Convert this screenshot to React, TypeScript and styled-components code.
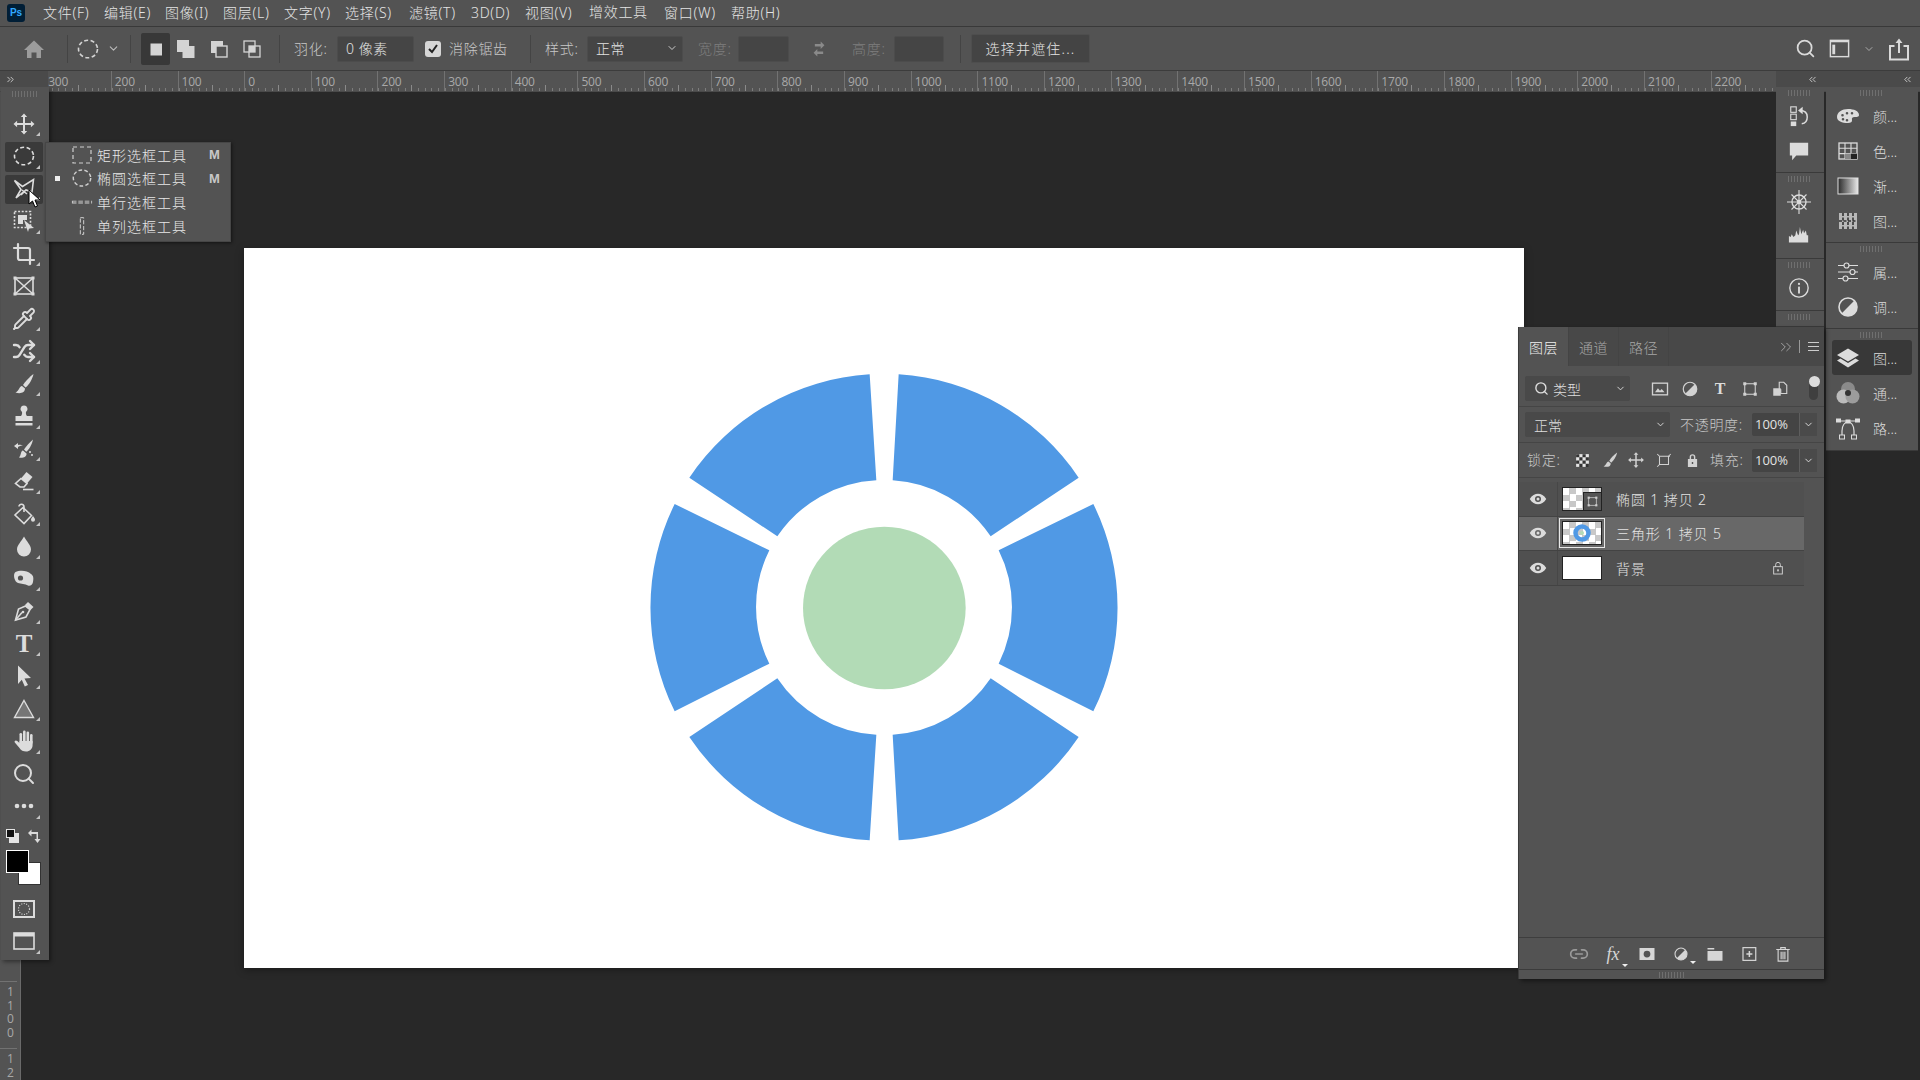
import React from 'react';
import styled, { createGlobalStyle } from 'styled-components';
import { Crop, Pipette, Shuffle, Search, Link2, ChevronDown, ChevronsLeft, ChevronsRight } from 'lucide-react';

const Global = createGlobalStyle`
  html, body { margin: 0; padding: 0; background: #282828; }
  #root { width: 1920px; height: 1080px; overflow: hidden; }
  * { box-sizing: border-box; }
`;

const Frame = styled.div`
  width: 1920px; height: 1080px; display: flex; flex-direction: column; background: #282828;
  font-family: "Noto Sans", "Noto Sans CJK SC", sans-serif; font-size: 14px; font-weight: 300;
  color: #dcdcdc; overflow: hidden;
`;
const MenuBar = styled.div`
  height: 27px; flex: none; display: flex; align-items: center; background: #535353;
  border-bottom: 1px solid #393939; padding-left: 7px;
`;
const PsLogo = styled.div`
  width: 18px; height: 18px; border-radius: 3px; background: #001e36; color: #31a8ff;
  font: 700 10px/18px "Liberation Sans", sans-serif; text-align: center; margin-right: 18px; flex: none;
`;
const MenuItem = styled.div<{ $w: number; $up?: boolean }>`
  width: ${p => p.$w}px; flex: none; white-space: nowrap; line-height: 20px; color: #e4e4e4; letter-spacing: .7px;
  padding-bottom: ${p => (p.$up ? 3 : 0)}px;
`;

const OptionsBar = styled.div`
  height: 44px; flex: none; display: flex; align-items: center; background: #535353;
  border-bottom: 1px solid #3c3c3c;
`;
const Cell = styled.div<{ $w: number; $on?: boolean }>`
  width: ${p => p.$w}px; height: 32px; flex: none; display: flex; align-items: center; justify-content: center;
  color: #d4d4d4; background: ${p => (p.$on ? '#383838' : 'transparent')}; border-radius: 2px;
`;
const MarqueeCell = styled.div`
  width: 62px; height: 32px; flex: none; display: flex; align-items: center; padding-left: 8px; color: #d4d4d4; gap: 7px;
`;
const Sep = styled.div<{ $ml?: number }>`
  width: 1px; height: 28px; background: #444; flex: none; margin-left: ${p => p.$ml ?? 0}px;
`;
const OptLabel = styled.div<{ $ml: number; $w: number; $dim?: boolean }>`
  margin-left: ${p => p.$ml}px; width: ${p => p.$w}px; flex: none; white-space: nowrap; letter-spacing: .7px;
  padding-bottom: 2px; color: ${p => (p.$dim ? '#7f7f7f' : '#c8c8c8')};
`;
const OptInput = styled.div<{ $w: number; $ml: number }>`
  width: ${p => p.$w}px; height: 26px; margin-left: ${p => p.$ml}px; flex: none; background: #454545;
  border: 1px solid #4c4c4c; display: flex; align-items: center; justify-content: space-between;
  padding: 0 4px 2px 8px; color: #e2e2e2; border-radius: 2px; letter-spacing: .5px;
`;
const Check = styled.div<{ $ml: number }>`
  width: 16px; height: 16px; margin-left: ${p => p.$ml}px; flex: none; background: #d6d6d6; border-radius: 3px;
  display: flex; align-items: center; justify-content: center; color: #222;
`;
const OptButton = styled.div<{ $ml: number }>`
  width: 119px; height: 29px; margin-left: ${p => p.$ml}px; flex: none; background: #444; border: 1px solid #4e4e4e;
  display: flex; align-items: center; justify-content: center; border-radius: 2px; color: #e4e4e4; letter-spacing: 1.2px;
  padding-bottom: 2px;
`;
const OptRight = styled.div`
  margin-left: auto; display: flex; align-items: center; color: #dadada; padding-right: 9px; gap: 12px;
`;

const Body = styled.div`
  position: relative; flex: 1; display: flex; flex-direction: column; min-height: 0;
`;
const RulerRow = styled.div`
  height: 21px; flex: none; display: flex; background: #535353; border-bottom: 1px solid #4a4a4a;
`;
const Cap = styled.div<{ $w: number }>`
  width: ${p => p.$w}px; height: 16px; flex: none; background: #4a4a4a; color: #cfcfcf; display: flex; align-items: center;
  justify-content: space-between; padding: 0 5px; z-index: 4;
`;
const CapLeftIcon = styled(ChevronsLeft)`
  margin-left: 26px;
`;
const CapRightIcon = styled(ChevronsLeft)`
  margin-right: 2px;
`;
const RulerTrack = styled.div`
  flex: 1; display: flex; overflow: hidden; min-width: 0;
`;
const RulerCell = styled.div<{ $first?: boolean }>`
  width: 66.667px; flex: none; border-left: 1px solid #727272; margin-left: ${p => (p.$first ? -3.8 : 0)}px;
  padding-left: 3px; font: 400 12px/22px "Open Sans", sans-serif; letter-spacing: -.2px; color: #a9a9a9;
  background-image:
    linear-gradient(#8a8a8a, #8a8a8a),
    repeating-linear-gradient(90deg, #7c7c7c 0 1px, transparent 1px 6.667px);
  background-size: 1px 6px, 100% 3px;
  background-position: 33px 100%, 0 100%;
  background-repeat: no-repeat;
`;
const Workspace = styled.div`
  flex: 1; display: flex; min-height: 0;
`;
const VRuler = styled.div`
  width: 21px; flex: none; background: #535353; padding-top: 889px; overflow: hidden;
  border-right: 1px solid #6a6a6a;
`;
const VCell = styled.div`
  height: 66.667px; border-top: 1px solid #727272; padding: 1px 0 0 3px;
  font: 400 12px/14px "Open Sans", sans-serif; color: #a9a9a9;
  writing-mode: vertical-rl; text-orientation: upright; letter-spacing: -3.5px;
`;
const Canvas = styled.div`
  flex: 1; background: #282828; min-width: 0;
`;
const Doc = styled.div`
  width: 1280px; height: 720px; margin: 156px 0 0 223px; background: #fff; display: flex;
  align-items: center; justify-content: center; box-shadow: 0 2px 8px rgba(0,0,0,.35);
`;

const Toolbox = styled.div`
  position: absolute; left: 1px; top: 16px; width: 48px; height: 873px; background: #535353; z-index: 3;
  display: flex; flex-direction: column; padding: 20.7px 2px 0 0; box-shadow: 2px 2px 4px rgba(0,0,0,.4);
`;
const Grip = styled.div<{ $w?: number; $top?: number }>`
  position: absolute; top: ${p => p.$top ?? 4}px; left: 50%; transform: translateX(-50%);
  width: ${p => p.$w ?? 26}px; height: 6px;
  background: repeating-linear-gradient(90deg, #6f6f6f 0 1px, transparent 1px 3px);
`;
const Tool = styled.div<{ $on?: boolean }>`
  position: relative; height: 32.5px; flex: none; display: flex; align-items: center; justify-content: center;
  color: #dcdcdc;
  &::before {
    content: ''; position: absolute; inset: 2px 4px 1px 4px; border-radius: 2px;
    background: ${p => (p.$on ? '#3a3a3a' : 'transparent')};
  }
  svg, b { position: relative; }
`;
const Corner = styled.i`
  position: absolute; right: 7px; bottom: 4px; width: 0; height: 0;
  border-style: solid; border-width: 0 0 4px 4px; border-color: transparent transparent #c4c4c4 transparent;
`;
const SerifT = styled.b<{ $s?: number }>`
  font: 700 ${p => p.$s ?? 25}px/${p => p.$s ?? 25}px "Liberation Serif", serif; color: #dcdcdc;
`;
const Colors = styled.div`
  position: relative; height: 70px; flex: none;
`;
const Swatch = styled.div<{ $x: number; $y: number; $c: string; $b: string; $s: number }>`
  position: absolute; left: ${p => p.$x}px; top: ${p => p.$y}px; width: ${p => p.$s}px; height: ${p => p.$s}px;
  background: ${p => p.$c}; border: 1px solid ${p => p.$b};
`;
const SwapIcon = styled.div`
  position: absolute; left: 26px; top: 5px; color: #dadada; display: flex;
`;
const Pointer = styled.svg`
  position: absolute; left: 28px; top: 118px; z-index: 6;
`;

const Flyout = styled.div`
  position: absolute; left: 45px; top: 71px; width: 186px; height: 100px; z-index: 5; background: #535353;
  border: 1px solid #464646; box-shadow: 1px 1px 3px rgba(0,0,0,.5);
`;
const FlyRow = styled.div`
  height: 23.6px; display: flex; align-items: center; color: #e8e8e8;
`;
const Bullet = styled.span<{ $on?: boolean }>`
  width: 5px; height: 5px; margin-left: 9px; flex: none; background: ${p => (p.$on ? '#eee' : 'transparent')};
`;
const FlyIcon = styled.span`
  width: 24px; margin-left: 10px; flex: none; display: flex; justify-content: center; color: #cfcfcf;
`;
const FlyText = styled.span`
  margin-left: 3px; width: 96px; flex: none; letter-spacing: 1px; white-space: nowrap;
`;
const FlyKey = styled.span`
  margin-left: 16px; font: 700 13px "Liberation Sans", sans-serif; color: #c8c8c8;
`;

const Dock = styled.div`
  position: absolute; left: 1776px; top: 16px; display: flex; gap: 2px; z-index: 1;
`;
const DockCol = styled.div<{ $w: number }>`
  width: ${p => p.$w}px; display: flex; flex-direction: column; gap: 1px;
`;
const DockGroup = styled.div<{ $pb: number }>`
  position: relative; background: #535353; padding: 11px 0 ${p => p.$pb}px; box-shadow: 0 1px 0 #3a3a3a;
`;
const DockRow = styled.div<{ $on?: boolean }>`
  height: 35px; display: flex; align-items: center; color: #dcdcdc;
  padding-left: ${p => (p.$on ? 4 : 10)}px; margin: 0 6px 0 ${p => (p.$on ? 6 : 0)}px; position: relative;
  background: ${p => (p.$on ? '#383838' : 'transparent')}; border-radius: 3px; gap: 13px; white-space: nowrap;
`;
const DockIconOnly = styled.div`
  height: 35px; display: flex; align-items: center; justify-content: center; color: #dcdcdc; padding-right: 3px;
`;
const DockIco = styled.span`
  width: 24px; flex: none; display: flex; justify-content: center;
`;

const LayersPanel = styled.div`
  position: absolute; left: 1519px; top: 256px; width: 305px; height: 652px; background: #535353; z-index: 2;
  display: flex; flex-direction: column; box-shadow: -1px 0 0 #3c3c3c, 2px 2px 4px rgba(0,0,0,.45);
`;
const Tabs = styled.div`
  height: 39px; flex: none; display: flex; background: #484848; align-items: stretch;
`;
const Tab = styled.div<{ $on?: boolean }>`
  width: 50px; display: flex; align-items: center; justify-content: center; letter-spacing: .6px;
  background: ${p => (p.$on ? '#535353' : 'transparent')}; color: ${p => (p.$on ? '#f0f0f0' : '#a6a6a6')};
  border-right: 1px solid #444;
`;
const TabTools = styled.div`
  margin-left: auto; display: flex; align-items: center; gap: 4px; padding-right: 5px; color: #bdbdbd;
`;
const TabBar = styled.i`
  width: 1px; height: 13px; background: #999; margin: 0 4px 0 0;
`;
const HoverMenu = styled.div`
  width: 11px; height: 9px; border-top: 1px solid #ccc; border-bottom: 1px solid #ccc; position: relative;
  &::after { content: ''; position: absolute; left: 0; right: 0; top: 3px; height: 1px; background: #ccc; }
`;
const PanelRow = styled.div<{ $h: number; $pt?: number }>`
  height: ${p => p.$h}px; flex: none; display: flex; align-items: center; padding: ${p => p.$pt ?? 0}px 6px 0;
  border-bottom: 1px solid #454545; color: #d0d0d0;
`;
const PSelect = styled.div<{ $w: number }>`
  width: ${p => p.$w}px; height: 25px; flex: none; background: #494949; border-radius: 2px;
  display: flex; align-items: center; padding: 0 4px 0 9px; gap: 4px; color: #dedede;
`;
const Grow = styled.span`
  flex: 1;
`;
const PIcon = styled.span<{ $x: number }>`
  margin-left: ${p => p.$x}px; width: 20px; flex: none; display: flex; justify-content: center; color: #d2d2d2;
`;
const Toggle = styled.div`
  position: relative; width: 11px; height: 22px; margin-left: 19px; border-radius: 6px; background: #3f3f3f;
  &::before { content: ''; position: absolute; top: -2px; left: 0; width: 11px; height: 11px; border-radius: 50%; background: #dcdcdc; }
`;
const PctBox = styled.div<{ $ml: number }>`
  width: 65px; height: 23px; flex: none; margin-left: ${p => p.$ml}px; display: flex; background: #444; border-radius: 2px;
  font: 400 13px/23px "Open Sans", sans-serif; color: #e2e2e2;
  span { width: 47px; padding-left: 3px; }
  em { flex: 1; border-left: 1px solid #5e5e5e; display: flex; align-items: center; justify-content: center; background: #4a4a4a; }
`;
const LayerList = styled.div`
  flex: 1; padding-top: 4px; display: flex; flex-direction: column; min-height: 0; border-bottom: 1px solid #3e3e3e;
`;
const LayerRow = styled.div<{ $on?: boolean }>`
  width: 285px; height: 34.5px; flex: none; display: flex; align-items: center; background: ${p => (p.$on ? '#686868' : '#505050')};
  border-bottom: 1px solid #434343; color: #e4e4e4; position: relative;
`;
const EyeCol = styled.div`
  width: 39px; height: 100%; flex: none; display: flex; align-items: center; justify-content: center;
  border-right: 1px solid #474747; color: #dcdcdc;
`;
const Thumb = styled.div<{ $white?: boolean; $sel?: boolean }>`
  position: relative; width: 40px; height: 24px; margin-left: 4px; flex: none; border: 1px solid #222;
  background: ${p => (p.$white ? '#fff' : 'repeating-conic-gradient(#c8c8c8 0 25%, #fff 0 50%) 0 0 / 13px 13px')};
  display: flex; align-items: center; justify-content: center;
  ${p => p.$sel ? `outline: 1px solid #e8e8e8; outline-offset: 2px;` : ''}
`;
const SmartBadge = styled.div`
  position: absolute; right: -1px; bottom: -1px; width: 19px; height: 19px; background: #555; border: 1px solid #222;
  display: flex; align-items: center; justify-content: center; color: #cfcfcf;
`;
const LayerName = styled.div`
  margin-left: 14px; letter-spacing: .9px; white-space: nowrap;
`;
const LayerLock = styled.span`
  position: absolute; left: 251px; color: #d4d4d4; display: flex;
`;
const FootBar = styled.div`
  height: 32px; flex: none; display: flex; align-items: center; border-bottom: 1px solid #3b3b3b; padding-left: 43px; color: #d6d6d6;
`;
const FootIcon = styled.span<{ $dim?: boolean }>`
  position: relative; width: 34px; flex: none; display: flex; justify-content: center; opacity: ${p => (p.$dim ? .55 : 1)};
`;
const FootFx = styled.span`
  font: italic 400 18px/22px "Liberation Serif", serif; color: #d6d6d6;
`;
const FootTri = styled.i`
  position: absolute; right: 2px; bottom: -2px; width: 0; height: 0;
  border-left: 3px solid transparent; border-right: 3px solid transparent; border-top: 3px solid #eee;
`;
const FootGrip = styled.div`
  position: relative; flex: none; height: 9px;
`;

type SP = { s?: number };
const Svg = ({ s = 24, children, vb = '0 0 24 24', ...r }: any) => (
  <svg width={s} height={s} viewBox={vb} fill="currentColor" {...r}>{children}</svg>
);
const Line = { fill: 'none', stroke: 'currentColor', strokeWidth: 1.6 };

const Ic: Record<string, React.FC<SP>> = {
  move: p => <Svg {...p}><path d="M12 1.5l3.2 3.6H13v5.9h5.9V8.8L22.5 12l-3.6 3.2V13H13v5.9h2.2L12 22.5l-3.2-3.6H11V13H5.1v2.2L1.5 12l3.6-3.2V11H11V5.1H8.8z" /></Svg>,
  ell: p => <Svg {...p}><ellipse cx="12" cy="12" rx="9.5" ry="8.8" {...Line} strokeDasharray="4 2.5" /></Svg>,
  lasso: p => <Svg {...p}><path d="M2.5 3.5L10.5 9.5 21.5 2.5 20 15 14 13 4 21 9 12.5z M10 13l5 4 M9 18l5-5" {...Line} /></Svg>,
  obj: p => <Svg {...p}><rect x="2.500" y="2.500" width="16" height="16" {...Line} strokeDasharray="2 1.6" /><path d="M6 6h9v5h-4v4H6z" /><path d="M12 11l10 8-5 .5-1 3.500z" /></Svg>,
  crop: p => <Crop size={p.s ?? 24} strokeWidth={2.2} />,
  frame: p => <Svg {...p}><rect x="3" y="4" width="18" height="16" {...Line} /><path d="M3 4l18 16M21 4L3 20" {...Line} /><rect x="1.500" y="2.500" width="3" height="3" /><rect x="19.500" y="2.500" width="3" height="3" /><rect x="1.500" y="18.500" width="3" height="3" /><rect x="19.500" y="18.500" width="3" height="3" /></Svg>,
  pipe: p => <Pipette size={p.s ?? 24} strokeWidth={1.9} />,
  shuffle: p => <Shuffle size={p.s ?? 24} strokeWidth={2.4} />,
  brush: p => <Svg {...p}><path d="M21.500 2c-3.500 2.500-8.500 7.500-10.500 11l2.500 2.500C17 13 20.500 7 21.500 2z" /><path d="M10 14c-3 .5-2.500 4.500-6.500 6.500 4.500 1.500 9.500.5 9.500-4z" /></Svg>,
  stamp: p => <Svg {...p}><path d="M12 1.500a3.500 3.500 0 0 1 2 6.400c-.4 1.500.2 3 1 4.100h5.500v5h-17v-5H9c.8-1.100 1.400-2.600 1-4.100a3.500 3.500 0 0 1 2-6.400z" /><rect x="3.500" y="19" width="17" height="2.500" /></Svg>,
  hbrush: p => <Svg {...p}><path d="M21 2.500c-3 2.500-7 7-9 10l2.300 2.300C17 12.500 20 7.500 21 2.500z" /><path d="M11 13.500c-2.600.5-1.500 4.500-4 7 3.500.8 8-.5 7.500-4z" /><path d="M2 9l4-3v2c2-.5 3.500-.3 5 .5-1.500 0-3 .3-5 1.500v2z" /><circle cx="18" cy="15" r="1" /><circle cx="20" cy="18" r="1" /></Svg>,
  eraser: p => <Svg {...p}><path d="M14.500 3l6 5-5.500 6.500-6-5z" /><path d="M9 9.500l6 5-3 3.500H8L3.500 14.500z" {...Line} /><path d="M11 20.500h10.500" {...Line} /></Svg>,
  bucket: p => <Svg {...p}><path d="M11 5.500l8.500 8-7.500 8-9-8.500z" {...Line} /><path d="M7 4.500c0-3 5-3 5 .5v5" {...Line} /><path d="M21 14c1 1.500 2 2.500 2 3.800a2 2 0 0 1-4 0c0-1.300 1-2.300 2-3.800z" /></Svg>,
  drop: p => <Svg {...p}><path d="M12 2.500c2.500 5 7 8.500 7 13a7 7 0 0 1-14 0c0-4.500 4.500-8 7-13z" /></Svg>,
  smudge: p => <Svg {...p}><path d="M3.500 5c4-2 11.500-2 15.500 2 3 2 2.500 5 2 8-.3 2.500-3 4.500-5 3.500-3-1.500-7-2-10-2.500-3.500-1-5.500-9-2.500-11z" /><circle cx="8.500" cy="11" r="2.600" fill="#535353" /></Svg>,
  pen: p => <Svg {...p}><path d="M16 3l5.500 5-3 3-5.500-5z" /><path d="M13.500 7L6.500 10 3.500 21l10.500-3 4-7.500z" {...Line} /><path d="M3.500 21l6.500-7.500" {...Line} /><circle cx="11" cy="13" r="1.300" /></Svg>,
  arrow: p => <Svg {...p}><path d="M6 1.500l13 12.500-6.500.5 3.500 6.500-3.200 1.500-3-6.800L6 20z" /></Svg>,
  tri: p => <Svg {...p}><path d="M12 3.500L21.500 20.500h-19z" fill="#767676" stroke="currentColor" strokeWidth="1.400" /></Svg>,
  hand: p => <Svg {...p}><rect x="7.500" y="4" width="2.600" height="11" rx="1.300" /><rect x="11" y="1.500" width="2.600" height="13" rx="1.300" /><rect x="14.500" y="2.500" width="2.600" height="12" rx="1.300" /><rect x="18" y="5" width="2.600" height="10" rx="1.300" /><path d="M7.500 12h13.100v4c0 4-3 6.500-6.500 6.500-3 0-5-1-7-4l-4.300-5c-1-1.500 1-3 2.500-1.500l2.200 2z" /></Svg>,
  zoom: p => <Search size={p.s ?? 24} strokeWidth={2} />,
  dots: p => <Svg {...p}><circle cx="5" cy="12" r="2.300" /><circle cx="12" cy="12" r="2.300" /><circle cx="19" cy="12" r="2.300" /></Svg>,
  qmask: p => <Svg {...p}><rect x="2" y="4" width="20" height="16" fill="none" stroke="currentColor" strokeWidth="2" /><circle cx="12" cy="12" r="5.500" fill="none" stroke="currentColor" strokeWidth="1.200" strokeDasharray="1 1.500" /></Svg>,
  screen: p => <Svg {...p}><rect x="2" y="4" width="20" height="16" fill="none" stroke="currentColor" strokeWidth="1.600" /><rect x="2" y="4" width="20" height="3.500" /></Svg>,
  home: p => <Svg {...p}><path d="M12 3.500L22 13h-3v8h-4.500v-5.500h-5V21H5v-8H2z" fill="#9c9c9c" /></Svg>,
  add1: p => <Svg {...p}><rect x="6.500" y="6.500" width="11.500" height="12" /></Svg>,
  add2: p => <Svg {...p}><rect x="3" y="3" width="12" height="12" /><rect x="8.500" y="9" width="12" height="12" /></Svg>,
  add3: p => <Svg {...p}><rect x="4" y="4" width="12" height="12" /><rect x="9" y="9" width="11" height="11" fill="#535353" stroke="currentColor" strokeWidth="1.400" /></Svg>,
  add4: p => <Svg {...p}><rect x="4" y="4" width="11" height="11" {...Line} strokeWidth="1.300" /><rect x="9" y="9" width="11" height="11" {...Line} strokeWidth="1.300" /><rect x="9" y="9" width="6" height="6" /></Svg>,
  swap: p => <Svg {...p}><path d="M14 3l4.500 4.500L14 12V9H7V6h7zM10 12v3h7v3h-7v3l-4.500-4.500z" fill="#8a8a8a" /></Svg>,
  panels: p => <Svg {...p}><rect x="2.500" y="3.500" width="19" height="17" fill="none" stroke="currentColor" strokeWidth="1.500" /><path d="M2.500 3.500h19v2h-19z" /><rect x="4.500" y="8" width="3" height="10" /></Svg>,
  share: p => <Svg {...p}><path d="M7.500 9H3v13.500h18V9h-4.500" {...Line} strokeWidth="2" /><path d="M12 1.500L15.500 6H13v10h-2V6H8.500z" /></Svg>,
  hist: p => <Svg {...p}><rect x="3" y="2" width="6" height="6" {...Line} strokeWidth="1.200" /><rect x="3" y="10" width="6" height="6" {...Line} strokeWidth="1.200" /><rect x="3" y="18" width="6" height="5" /><path d="M13 6c6 0 8 3 8 7s-2.500 7-6 7.500" {...Line} /><path d="M11 6l5-4v8z" /></Svg>,
  chat: p => <Svg {...p}><path d="M2 3h20v14H9l-4.500 5v-5H2z" /></Svg>,
  wheel: p => <Svg {...p}><circle cx="12" cy="12" r="7" {...Line} strokeWidth="1.400" /><circle cx="12" cy="12" r="2.200" /><path d="M12 0v24M0 12h24M4.500 4.500l15 15M19.500 4.500l-15 15" {...Line} strokeWidth="1.100" /></Svg>,
  histo: p => <Svg {...p}><path d="M1 18v-7l2 1 1-3 2 3 2-2 1-5 2 5 1-1 1-8 1.500 8 2-5 1 4 2-3 1 5h1.500v8z" /></Svg>,
  info: p => <Svg {...p}><circle cx="12" cy="12" r="10" fill="none" stroke="currentColor" strokeWidth="1.500" /><circle cx="12" cy="7.500" r="1.200" /><rect x="11" y="10.500" width="2" height="7.500" /></Svg>,
  palette: p => <Svg {...p}><path fillRule="evenodd" d="M1 13c0-5 5-8 11-8s11 2 11 6c0 2-2.500 2-4.500 2-2 0-3 1-2.500 3 .5 2-1.500 3-4 3C6 19 1 17 1 13zM6.500 10a1.300 1.300 0 1 0 0 2.600 1.300 1.300 0 0 0 0-2.600zM11 8a1.300 1.300 0 1 0 0 2.600A1.300 1.300 0 0 0 11 8zM16 8a1.300 1.300 0 1 0 0 2.600A1.300 1.300 0 0 0 16 8zM7 14a1.300 1.300 0 1 0 0 2.600A1.300 1.300 0 0 0 7 14zM11 15a1.300 1.300 0 1 0 0 2.600 1.300 1.300 0 0 0 0-2.600z" /></Svg>,
  grid: p => <Svg {...p}><rect x="3" y="4" width="18" height="16" {...Line} strokeWidth="1.300" /><path d="M3 9.300h18M3 14.600h18M9 4v16M15 4v16" {...Line} strokeWidth="1.100" /><rect x="15" y="14.600" width="6" height="5.400" fill="#222" /><rect x="9" y="14.600" width="6" height="5.400" fill="#888" /></Svg>,
  pattern: p => <Svg {...p}><rect x="3" y="4" width="18" height="16" fill="#b8b8b8" /><path d="M7 4v16M12 4v16M17 4v16M3 12h18" stroke="#333" strokeWidth="1.600" strokeDasharray="3 1.500" /></Svg>,
  sliders: p => <Svg {...p}><path d="M2 5.500h6M13 5.500h9M2 12h12M19 12h3M2 18.500h5M12 18.500h10" {...Line} strokeWidth="1.200" /><circle cx="10.500" cy="5.500" r="2.500" {...Line} strokeWidth="1.200" /><circle cx="16.500" cy="12" r="2.500" {...Line} strokeWidth="1.200" /><circle cx="9.500" cy="18.500" r="2.500" {...Line} strokeWidth="1.200" /></Svg>,
  half: p => <Svg {...p}><circle cx="12" cy="12" r="9" fill="none" stroke="currentColor" strokeWidth="1.600" /><path d="M18.400 5.600A9 9 0 0 1 5.600 18.400z" /></Svg>,
  layers: p => <Svg {...p}><path d="M12 2.500L23 9l-11 6.500L1 9z" /><path d="M4.500 12.500L1 14.500l11 7 11-7-3.500-2L12 17z" /></Svg>,
  chan: p => <Svg {...p}><circle cx="12" cy="8" r="7" fill="#8a8a8a" /><circle cx="7.500" cy="15.500" r="7" fill="#bbb" /><circle cx="16.500" cy="15.500" r="7" fill="#9c9c9c" /><circle cx="12" cy="12" r="3" fill="#333" /></Svg>,
  path: p => <Svg {...p}><path d="M6 22V15c0-6 3-9 6-9s6 3 6 9v7M1 5h22" fill="none" stroke="currentColor" strokeWidth="1.200" /><rect x="9.500" y="3.500" width="5" height="4" /><rect x="0" y="2.500" width="5" height="4" /><rect x="19" y="2.500" width="5" height="4" /><rect x="3.500" y="19" width="5" height="4" fill="#535353" stroke="currentColor" /><rect x="15.500" y="19" width="5" height="4" fill="#535353" stroke="currentColor" /></Svg>,
  image: p => <Svg {...p}><rect x="3" y="5" width="18" height="14" fill="none" stroke="currentColor" strokeWidth="1.600" /><path d="M6 16l3.500-5 2.500 3 2-2 3.500 4z" /></Svg>,
  xform: p => <Svg {...p}><rect x="5" y="5" width="14" height="14" fill="none" stroke="currentColor" strokeWidth="1.400" /><rect x="3" y="3" width="4" height="4" /><rect x="17" y="3" width="4" height="4" /><rect x="3" y="17" width="4" height="4" /><rect x="17" y="17" width="4" height="4" /></Svg>,
  smart: p => <Svg {...p}><path d="M11 3h6l4 4v11H13v-5H11z" fill="none" stroke="currentColor" strokeWidth="1.500" /><rect x="3" y="11" width="10" height="10" /></Svg>,
  checker: p => <Svg {...p}><rect x="3" y="3" width="18" height="18" fill="#e4e4e4" /><path d="M3 3h4.500v4.500H3zM12 3h4.500v4.500H12zM7.500 7.500H12V12H7.500zM16.500 7.500H21V12h-4.500zM3 12h4.500v4.500H3zM12 12h4.500v4.500H12zM7.500 16.500H12V21H7.500zM16.500 16.500H21V21h-4.500z" fill="#333" /></Svg>,
  art: p => <Svg {...p}><path d="M6 7h14M6 7v11h12V7" {...Line} strokeWidth="1.400" /><path d="M3 4l3 3M21 4l-3 3M6 18l-3 3" {...Line} strokeWidth="1.400" /></Svg>,
  lock: p => <Svg {...p}><path fillRule="evenodd" d="M8 10V7a4 4 0 0 1 8 0v3h2.500v11h-13V10zM10 10h4V7a2 2 0 0 0-4 0zM11 14v3h2v-3z" /></Svg>,
  lockO: p => <Svg {...p}><path d="M8.500 10V7a3.500 3.500 0 0 1 7 0v3" {...Line} strokeWidth="1.400" /><rect x="5.500" y="10" width="13" height="11" {...Line} strokeWidth="1.400" /><rect x="10.800" y="14" width="2.400" height="3" /></Svg>,
  eye: p => <Svg {...p}><path fillRule="evenodd" d="M1 12c3-5 7-7 11-7s8 2 11 7c-3 5-7 7-11 7S4 17 1 12zM12 8a4 4 0 1 0 0 8 4 4 0 0 0 0-8z" /><circle cx="12" cy="12" r="2" /></Svg>,
  mask: p => <Svg {...p}><path fillRule="evenodd" d="M2 4h20v16H2zM12 7.500a4.500 4.500 0 1 0 0 9 4.500 4.500 0 0 0 0-9z" /></Svg>,
  folder: p => <Svg {...p}><path d="M2 4h9v2H2zM2 8h20v13H2z" /></Svg>,
  newL: p => <Svg {...p}><rect x="4" y="3.500" width="17" height="17" fill="none" stroke="currentColor" strokeWidth="1.600" /><path d="M11.500 8h2v3h3v2h-3v3h-2v-3h-3v-2h3z" /></Svg>,
  trash: p => <Svg {...p}><path d="M3 6h18M9 6V3.500h6V6M5.500 6v15.500h13V6M9.500 9v10M12 9v10M14.500 9v10" {...Line} strokeWidth="1.500" /></Svg>,
  rectM: p => <Svg {...p}><rect x="3" y="4" width="18" height="16" {...Line} strokeWidth="1.200" strokeDasharray="4 3" /></Svg>,
  rowM: p => <Svg {...p}><path d="M1 12h22" stroke="currentColor" fill="none" strokeWidth="3" strokeDasharray="5 2" /><path d="M2 12h20" stroke="#535353" fill="none" strokeWidth="1" /></Svg>,
  colM: p => <Svg {...p}><rect x="10" y="2" width="4" height="20" fill="none" stroke="currentColor" strokeWidth="1.200" strokeDasharray="5 2" /></Svg>,
};

const tools = [
  { k: 'move', c: true }, { k: 'ell', c: true, on: true }, { k: 'lasso', c: true, on: true }, { k: 'obj', c: true },
  { k: 'crop', c: true }, { k: 'frame' }, { k: 'pipe', c: true }, { k: 'shuffle', c: true }, { k: 'brush', c: true },
  { k: 'stamp', c: true }, { k: 'hbrush', c: true }, { k: 'eraser', c: true }, { k: 'bucket', c: true },
  { k: 'drop', c: true }, { k: 'smudge', c: true }, { k: 'pen', c: true }, { k: 'T', c: true }, { k: 'arrow', c: true },
  { k: 'tri', c: true }, { k: 'hand', c: true }, { k: 'zoom' }, { k: 'dots', c: true },
];
const menus: [string, number, boolean?][] = [
  ['文件(F)', 61], ['编辑(E)', 61], ['图像(I)', 58], ['图层(L)', 61], ['文字(Y)', 61], ['选择(S)', 64],
  ['滤镜(T)', 62], ['3D(D)', 54], ['视图(V)', 64], ['增效工具', 75, true], ['窗口(W)', 67], ['帮助(H)', 60],
];
const rulerVals = Array.from({ length: 26 }, (_, i) => Math.abs(-300 + i * 100));
const vVals = ['1100', '1200'];
const dock1 = [
  { pb: 4, rows: ['hist', 'chat'] }, { pb: 4, rows: ['wheel', 'histo'] }, { pb: 5, rows: ['info'] }, { pb: 4, rows: [] as string[] },
];
const dock2 = [
  { pb: 4, rows: [['palette', '颜...'], ['grid', '色...'], ['grad', '渐...'], ['pattern', '图...']] },
  { pb: 4, rows: [['sliders', '属...'], ['half', '调...']] },
  { pb: 5, rows: [['layers', '图...', 'on'], ['chan', '通...'], ['path', '路...']] },
];

const GradIcon = () => (
  <svg width="24" height="24" viewBox="0 0 24 24">
    <defs><linearGradient id="g1"><stop offset="0" stopColor="#2a2a2a" /><stop offset="1" stopColor="#e8e8e8" /></linearGradient></defs>
    <rect x="2" y="4" width="20" height="16" fill="url(#g1)" stroke="#e0e0e0" strokeWidth="1" />
  </svg>
);

const Donut = () => (
  <svg width="520" height="520" viewBox="12 -5 1560 1560">
    <g fill="#5099e5">
      <path d="M208 384A702 702 0 0 1 749 74L769 392A382 382 0 0 0 472 560Z" />
      <path d="M836 74A702 702 0 0 1 1376 384L1112 560A382 382 0 0 0 818 392Z" />
      <path d="M1420 463A702 702 0 0 1 1420 1085L1136 942A382 382 0 0 0 1136 602Z" />
      <path d="M1376 1162A702 702 0 0 1 836 1472L818 1155A382 382 0 0 0 1112 986Z" />
      <path d="M749 1472A702 702 0 0 1 208 1162L472 986A382 382 0 0 0 769 1155Z" />
      <path d="M164 1085A702 702 0 0 1 164 463L448 602A382 382 0 0 0 448 942Z" />
    </g>
    <circle cx="793" cy="775" r="244" fill="#b2dbb6" />
  </svg>
);

const MiniDonut = () => (
  <svg width="18" height="18" viewBox="0 0 18 18">
    <circle cx="9" cy="9" r="6.500" fill="none" stroke="#5099e5" strokeWidth="4.500" />
    <circle cx="9" cy="9" r="2" fill="#b2dbb6" />
  </svg>
);

export default function App() {
  return (
    <Frame>
      <Global />
      <MenuBar>
        <PsLogo>Ps</PsLogo>
        {menus.map(([t, w, up]) => <MenuItem key={t} $w={w} $up={up}>{t}</MenuItem>)}
      </MenuBar>
      <OptionsBar>
        <Cell $w={67}><Ic.home s={24} /></Cell>
        <Sep />
        <MarqueeCell><Ic.ell s={24} /><ChevronDown size={13} color="#bbb" /></MarqueeCell>
        <Sep />
        <Cell $w={10} />
        <Cell $w={29} $on><Ic.add1 s={24} /></Cell>
        <Cell $w={32.5}><Ic.add2 s={24} /></Cell>
        <Cell $w={33}><Ic.add3 s={24} /></Cell>
        <Cell $w={32}><Ic.add4 s={24} /></Cell>
        <Sep $ml={11.5} />
        <OptLabel $ml={14} $w={36}>羽化:</OptLabel>
        <OptInput $w={77} $ml={7}>0 像素</OptInput>
        <Check $ml={11}><svg width="12" height="12" viewBox="0 0 12 12"><path d="M2 6l3 3 5-7" fill="none" stroke="#222" strokeWidth="2" /></svg></Check>
        <OptLabel $ml={8} $w={60}>消除锯齿</OptLabel>
        <Sep $ml={21} />
        <OptLabel $ml={14} $w={36}>样式:</OptLabel>
        <OptInput $w={96} $ml={6}>正常<ChevronDown size={12} color="#ccc" /></OptInput>
        <OptLabel $ml={15} $w={36} $dim>宽度:</OptLabel>
        <OptInput $w={51} $ml={4} />
        <Cell $w={60}><Ic.swap s={20} /></Cell>
        <OptLabel $ml={3} $w={36} $dim>高度:</OptLabel>
        <OptInput $w={50} $ml={6} />
        <Sep $ml={16} />
        <OptButton $ml={10}>选择并遮住...</OptButton>
        <OptRight>
          <Search size={21} strokeWidth={2} />
          <Ic.panels s={23} />
          <ChevronDown size={12} color="#aaa" />
          <Ic.share s={24} />
        </OptRight>
      </OptionsBar>
      <Body>
        <RulerRow>
          <Cap $w={48}><ChevronsRight size={11} /></Cap>
          <RulerTrack>
            {rulerVals.map((v, i) => <RulerCell key={i} $first={i === 0}>{v}</RulerCell>)}
          </RulerTrack>
          <Cap $w={144}><CapLeftIcon size={11} /><CapRightIcon size={11} /></Cap>
        </RulerRow>
        <Workspace>
          <VRuler>
            {vVals.map(v => <VCell key={v}>{v}</VCell>)}
          </VRuler>
          <Canvas>
            <Doc><Donut /></Doc>
          </Canvas>
        </Workspace>

        <Toolbox>
          <Grip />
          {tools.map(({ k, c, on }) => {
            const I = Ic[k];
            return (
              <Tool key={k} $on={on}>
                {k === 'T' ? <SerifT>T</SerifT> : <I s={24} />}
                {c && <Corner />}
              </Tool>
            );
          })}
          <Colors>
            <Swatch $x={8} $y={10} $c="#e4e4e4" $b="#e4e4e4" $s={10} />
            <Swatch $x={5} $y={6} $c="#111" $b="#e4e4e4" $s={9} />
            <SwapIcon><svg width="16" height="16" viewBox="0 0 16 16"><path d="M1 5l3.500-3.500V4H11v7h2.500L10.500 15 7.500 11H9.500V6H4.500v2.500z" fill="currentColor" /></svg></SwapIcon>
            <Swatch $x={17} $y={39} $c="#fff" $b="#333" $s={23} />
            <Swatch $x={5} $y={27} $c="#000" $b="#fff" $s={23} />
          </Colors>
          <Tool><Ic.qmask s={24} /></Tool>
          <Tool><Ic.screen s={24} /><Corner /></Tool>
        </Toolbox>

        <Pointer width="13" height="19" viewBox="0 0 13 19">
          <path d="M1 1v14l3.500-3 2.500 6 2.500-1-2.500-6H12z" fill="#fff" stroke="#000" strokeWidth="1" />
        </Pointer>

        <Flyout>
          <FlyRow><Bullet /><FlyIcon><Ic.rectM s={24} /></FlyIcon><FlyText>矩形选框工具</FlyText><FlyKey>M</FlyKey></FlyRow>
          <FlyRow><Bullet $on /><FlyIcon><Ic.ell s={22} /></FlyIcon><FlyText>椭圆选框工具</FlyText><FlyKey>M</FlyKey></FlyRow>
          <FlyRow><Bullet /><FlyIcon><Ic.rowM s={22} /></FlyIcon><FlyText>单行选框工具</FlyText></FlyRow>
          <FlyRow><Bullet /><FlyIcon><Ic.colM s={20} /></FlyIcon><FlyText>单列选框工具</FlyText></FlyRow>
        </Flyout>

        <Dock>
          <DockCol $w={48}>
            {dock1.map((g, i) => (
              <DockGroup key={i} $pb={g.pb}>
                <Grip $w={24} $top={3} />
                {g.rows.map(k => { const I = Ic[k]; return <DockIconOnly key={k}><I s={k === 'wheel' ? 24 : 22} /></DockIconOnly>; })}
              </DockGroup>
            ))}
          </DockCol>
          <DockCol $w={92}>
            {dock2.map((g, i) => (
              <DockGroup key={i} $pb={g.pb}>
                <Grip $w={24} $top={3} />
                {g.rows.map(([k, t, on]) => {
                  const I = Ic[k];
                  return <DockRow key={t + k} $on={!!on}><DockIco>{k === 'grad' ? <GradIcon /> : <I s={24} />}</DockIco>{t}</DockRow>;
                })}
              </DockGroup>
            ))}
          </DockCol>
        </Dock>

        <LayersPanel>
          <Tabs>
            <Tab $on>图层</Tab><Tab>通道</Tab><Tab>路径</Tab>
            <TabTools><ChevronsRight size={18} strokeWidth={1} /><TabBar /><HoverMenu /></TabTools>
          </Tabs>
          <PanelRow $h={41} $pt={5}>
            <PSelect $w={105}><Search size={15} strokeWidth={2.2} />类型<Grow /><ChevronDown size={11} /></PSelect>
            <PIcon $x={20}><Ic.image s={20} /></PIcon>
            <PIcon $x={10}><Ic.half s={18} /></PIcon>
            <PIcon $x={10}><SerifT $s={16}>T</SerifT></PIcon>
            <PIcon $x={10}><Ic.xform s={18} /></PIcon>
            <PIcon $x={10}><Ic.smart s={18} /></PIcon>
            <Toggle />
          </PanelRow>
          <PanelRow $h={36}>
            <PSelect $w={145}>正常<Grow /><ChevronDown size={11} /></PSelect>
            <OptLabel $ml={10} $w={65}>不透明度:</OptLabel>
            <PctBox $ml={7}><span>100%</span><em><ChevronDown size={11} /></em></PctBox>
          </PanelRow>
          <PanelRow $h={35}>
            <OptLabel $ml={2} $w={36}>锁定:</OptLabel>
            <PIcon $x={9}><Ic.checker s={17} /></PIcon>
            <PIcon $x={8}><Ic.brush s={18} /></PIcon>
            <PIcon $x={6}><Ic.move s={18} /></PIcon>
            <PIcon $x={8}><Ic.art s={18} /></PIcon>
            <PIcon $x={8}><Ic.lock s={17} /></PIcon>
            <OptLabel $ml={8} $w={36}>填充:</OptLabel>
            <PctBox $ml={6}><span>100%</span><em><ChevronDown size={11} /></em></PctBox>
          </PanelRow>
          <LayerList>
            <LayerRow>
              <EyeCol><Ic.eye s={18} /></EyeCol>
              <Thumb><SmartBadge><Ic.xform s={13} /></SmartBadge></Thumb>
              <LayerName>椭圆 1 拷贝 2</LayerName>
            </LayerRow>
            <LayerRow $on>
              <EyeCol><Ic.eye s={18} /></EyeCol>
              <Thumb $sel><MiniDonut /></Thumb>
              <LayerName>三角形 1 拷贝 5</LayerName>
            </LayerRow>
            <LayerRow>
              <EyeCol><Ic.eye s={18} /></EyeCol>
              <Thumb $white />
              <LayerName>背景</LayerName>
              <LayerLock><Ic.lockO s={16} /></LayerLock>
            </LayerRow>
          </LayerList>
          <FootBar>
            <FootIcon $dim><Link2 size={20} /></FootIcon>
            <FootIcon><FootFx>fx</FootFx><FootTri /></FootIcon>
            <FootIcon><Ic.mask s={18} /></FootIcon>
            <FootIcon><Ic.half s={16} /><FootTri /></FootIcon>
            <FootIcon><Ic.folder s={18} /></FootIcon>
            <FootIcon><Ic.newL s={18} /></FootIcon>
            <FootIcon><Ic.trash s={18} /></FootIcon>
          </FootBar>
          <FootGrip><Grip $w={26} $top={2} /></FootGrip>
        </LayersPanel>
      </Body>
    </Frame>
  );
}
